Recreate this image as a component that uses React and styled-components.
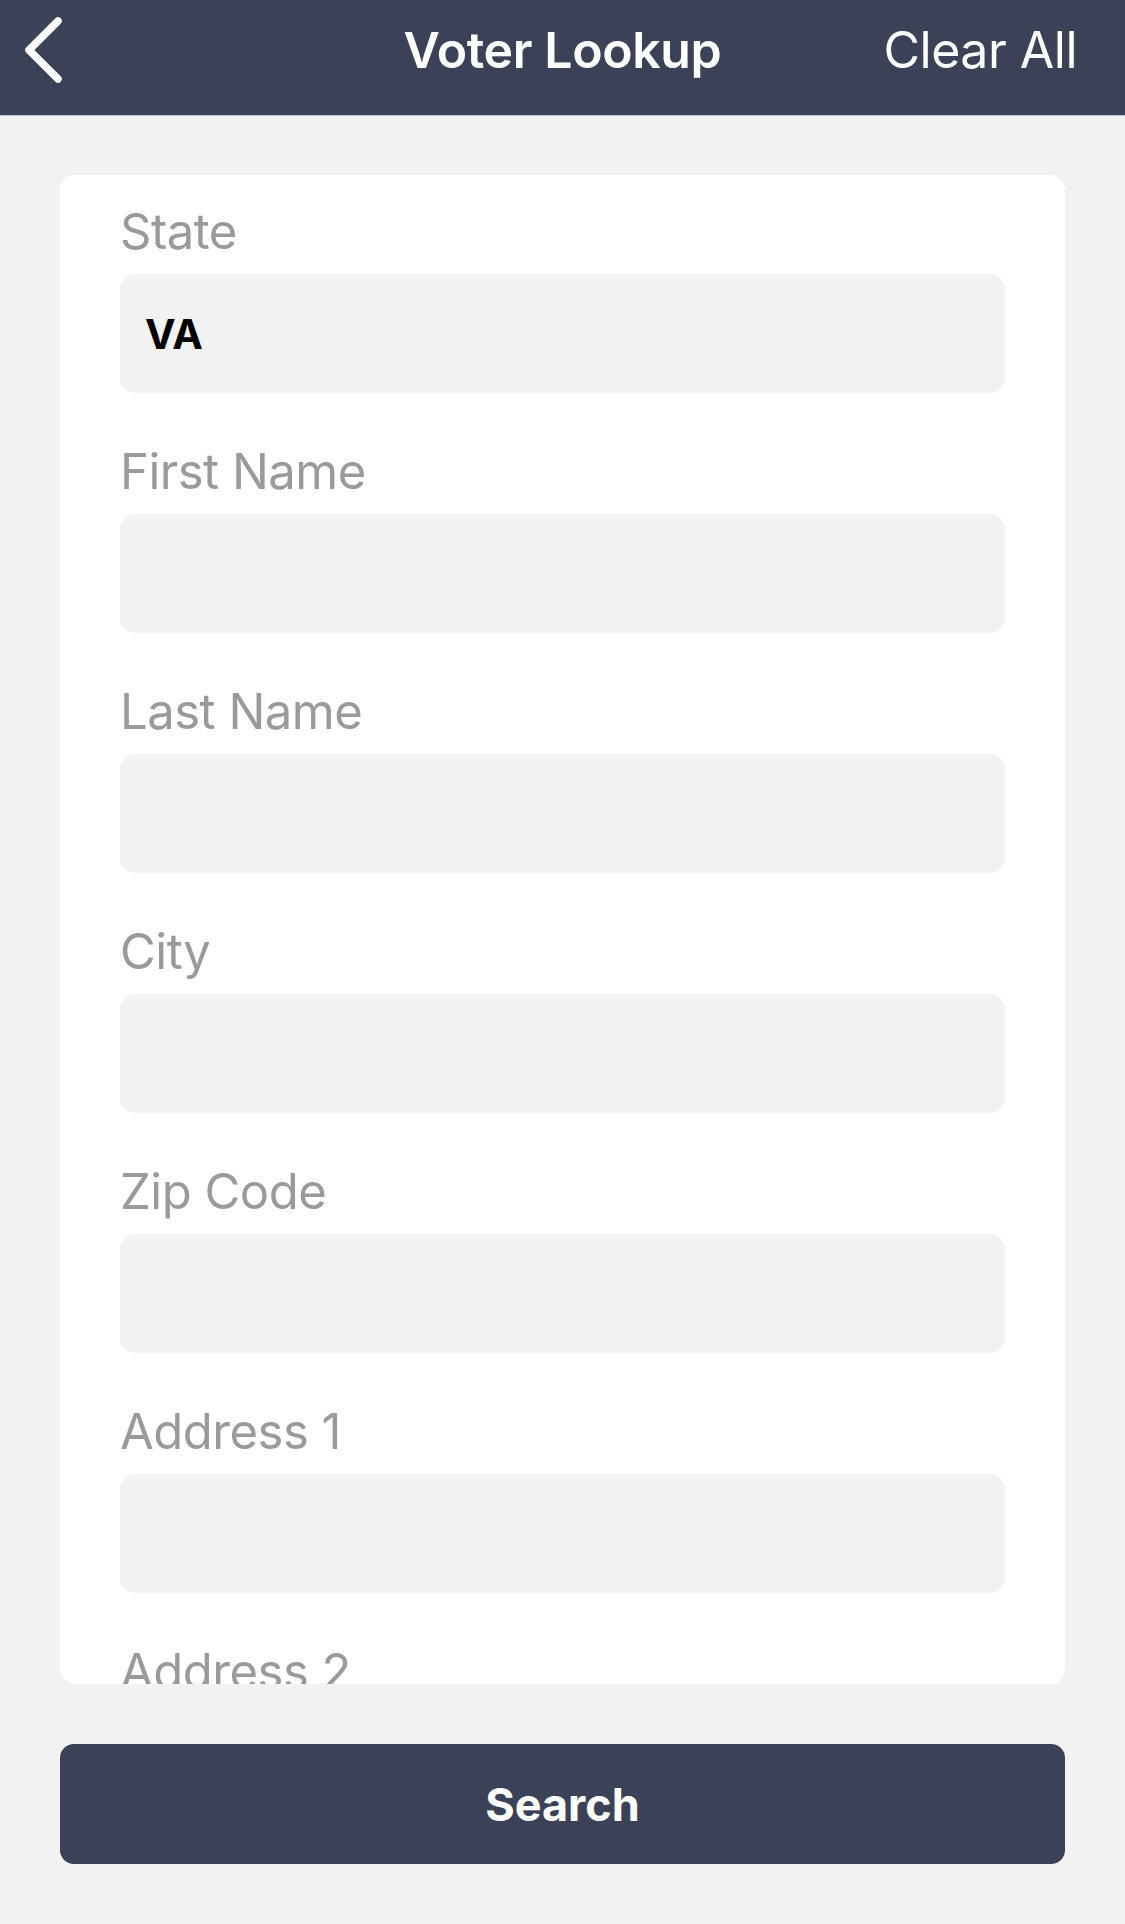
import styled, { createGlobalStyle } from "styled-components";

const GlobalStyle = createGlobalStyle`
  html, body {
    margin: 0;
    padding: 0;
    background: #f2f2f2;
  }
  * {
    box-sizing: border-box;
  }
`;

const Page = styled.div`
  height: 100vh;
  display: flex;
  flex-direction: column;
  font-family: Inter, "Noto Sans", sans-serif;
  background: #f2f2f2;
`;

const Header = styled.header`
  height: 116px;
  flex-shrink: 0;
  background: #3b4156;
  border-bottom: 1px solid #c9cacd;
  display: grid;
  grid-template-columns: 1fr auto 1fr;
  align-items: center;
  padding: 0 22px;
  color: #fff;
`;

const BackButton = styled.button`
  justify-self: start;
  background: none;
  border: 0;
  padding: 0;
  width: 48px;
  height: 70px;
  display: flex;
  align-items: center;
  cursor: pointer;
  margin-top: -16px;
`;

const Title = styled.h1`
  margin: 0 0 16px;
  font-size: 50px;
  font-weight: 600;
  letter-spacing: -0.4px;
`;

const HeaderAction = styled.button`
  justify-self: end;
  background: none;
  border: 0;
  padding: 0;
  margin: 0 26px 16px 0;
  color: #fff;
  font-family: inherit;
  font-size: 50px;
  font-weight: 400;
  letter-spacing: -0.5px;
  cursor: pointer;
`;

const Main = styled.main`
  flex: 1;
  min-height: 0;
  display: flex;
  flex-direction: column;
  gap: 60px;
  padding: 59px 60px 60px;
`;

const Card = styled.div`
  flex: 1;
  min-height: 0;
  overflow: hidden;
  background: #fff;
  border-radius: 15px;
  padding: 26px 60px 0;
`;

const Field = styled.div`
  display: flex;
  flex-direction: column;
  gap: 11px;
  margin-bottom: 48px;
`;

const Label = styled.label`
  font-size: 49px;
  line-height: 62px;
  color: #9a9a9a;
  letter-spacing: -0.5px;
`;

const Input = styled.div`
  height: 119px;
  background: #f2f2f2;
  border-radius: 15px;
  display: flex;
  align-items: center;
  padding: 0 25px;
  font-size: 41px;
  font-weight: 700;
  color: #000;
`;

const SearchButton = styled.button`
  flex-shrink: 0;
  height: 120px;
  border: 0;
  border-radius: 14px;
  background: #3b4156;
  color: #fff;
  font-family: inherit;
  font-size: 45px;
  font-weight: 700;
  cursor: pointer;
`;

const fields = [
  { label: "State", value: "VA" },
  { label: "First Name" },
  { label: "Last Name" },
  { label: "City" },
  { label: "Zip Code" },
  { label: "Address 1" },
  { label: "Address 2" },
  { label: "Phone" },
];

function Chevron() {
  return (
    <svg width="42" height="66" viewBox="0 0 42 66">
      <path
        d="M36 4 L7 33 L36 62"
        fill="none"
        stroke="#fff"
        strokeWidth="7.5"
        strokeLinecap="round"
        strokeLinejoin="round"
      />
    </svg>
  );
}

export default function App() {
  return (
    <>
      <GlobalStyle />
      <Page>
        <Header>
          <BackButton>
            <Chevron />
          </BackButton>
          <Title>Voter Lookup</Title>
          <HeaderAction>Clear All</HeaderAction>
        </Header>
        <Main>
          <Card>
            {fields.map((f) => (
              <Field key={f.label}>
                <Label>{f.label}</Label>
                <Input>{f.value}</Input>
              </Field>
            ))}
          </Card>
          <SearchButton>Search</SearchButton>
        </Main>
      </Page>
    </>
  );
}
